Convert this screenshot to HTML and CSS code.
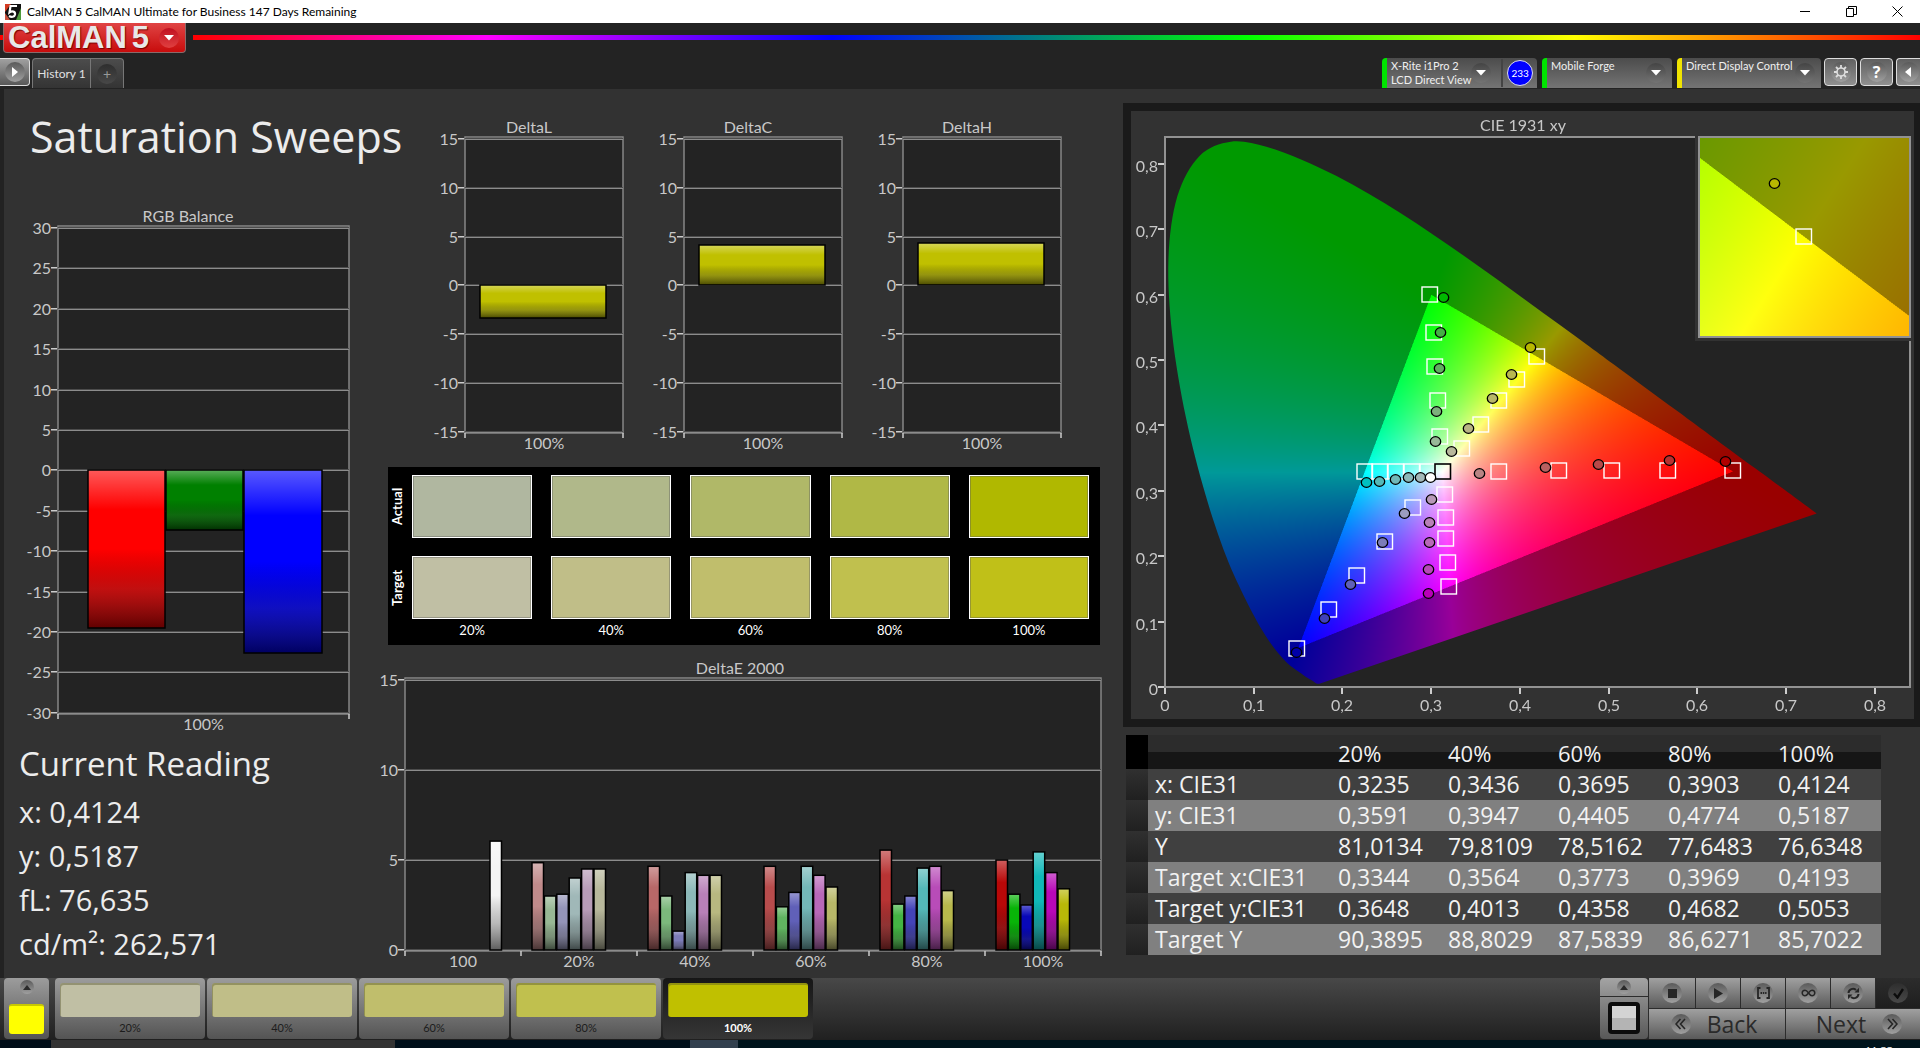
FILE: index.html
```html
<!DOCTYPE html>
<html lang="en">
<head>
<meta charset="utf-8">
<title>CalMAN 5 CalMAN Ultimate for Business</title>
<link rel="stylesheet" href="styles.css">
</head>
<body>
<div class="titlebar">
  <svg class="app-icon" viewBox="0 0 16 16" aria-hidden="true"><rect width="16" height="16" fill="#111"/><path d="M0 0h6L0 8z" fill="#d33a22"/><path d="M0 9l5 7H0z" fill="#c8503c"/><path d="M16 4v12h-5z" fill="#4e9a3c"/><path d="M12 2H5.500L4.500 8.500C7 6.500 10.500 7.500 10 10.500C9.500 13 6.500 13.500 4 12" fill="none" stroke="#fff" stroke-width="2.200"/></svg>
  <span class="titlebar-text">CalMAN 5 CalMAN Ultimate for Business 147 Days Remaining</span>
  <div class="window-buttons">
    <button class="window-button" aria-label="Minimize"><svg width="11" height="11" viewBox="0 0 11 11"><path d="M0 5.500h10" stroke="#000"/></svg></button>
    <button class="window-button" aria-label="Restore"><svg width="11" height="11" viewBox="0 0 11 11"><path d="M.5 2.500h7v8h-7zM2.500 2.500V.5h8v8H8" fill="none" stroke="#000"/></svg></button>
    <button class="window-button" aria-label="Close"><svg width="11" height="11" viewBox="0 0 11 11"><path d="M.5.5l10 10M10.500.5l-10 10" stroke="#000"/></svg></button>
  </div>
</div>

<header class="header">
  <div class="brand-row">
    <span class="spectrum-start"></span>
    <button class="brand" aria-label="CalMAN 5 menu"><span class="brand-name">CalMAN</span><span class="brand-version">5</span><span class="round brand-arrow"><svg width="10" height="6" viewBox="0 0 10 6"><path d="M0 0h10L5 5.500z" fill="#fff"/></svg></span></button>
    <span class="spectrum"></span>
  </div>
  <div class="tab-row">
    <button class="edge-button edge-left" aria-label="Show panel"><span class="round"><svg width="8" height="12" viewBox="0 0 8 12"><path d="M1 1v10l6-5z" fill="#fff"/></svg></span></button>
    <div class="tabs"><button class="tab">History 1</button><button class="tab tab-add" aria-label="Add tab"><span class="round round-dark">+</span></button></div>
    <div class="devices">
      <button class="device green meter"><span class="device-text">X-Rite i1Pro 2<br>LCD Direct View</span><span class="round round-mid"><svg width="10" height="6" viewBox="0 0 10 6"><path d="M0 0h10L5 5.500z" fill="#fff"/></svg></span><span class="count-cell"><span class="count">233</span></span></button>
      <button class="device green source"><span class="device-text">Mobile Forge</span><span class="round round-mid"><svg width="10" height="6" viewBox="0 0 10 6"><path d="M0 0h10L5 5.500z" fill="#fff"/></svg></span></button>
      <button class="device yellow display"><span class="device-text">Direct Display Control</span><span class="round round-mid"><svg width="10" height="6" viewBox="0 0 10 6"><path d="M0 0h10L5 5.500z" fill="#fff"/></svg></span></button>
      <div class="tools">
        <button class="edge-button" aria-label="Settings"><span class="round"><svg width="14" height="14" viewBox="0 0 14 14"><circle cx="7" cy="7" r="4" fill="none" stroke="#ddd" stroke-width="1.600"/><path d="M7 0v3M7 11v3M0 7h3M11 7h3M2 2l2.200 2.200M9.800 9.800L12 12M12 2L9.800 4.200M4.200 9.800L2 12" stroke="#ddd" stroke-width="1.800"/></svg></span></button>
        <button class="edge-button help" aria-label="Help"><span class="round">?</span></button>
        <button class="edge-button edge-right" aria-label="Collapse"><span class="round"><svg width="7" height="12" viewBox="0 0 7 12"><path d="M6 1v10L0 6z" fill="#fff"/></svg></span></button>
      </div>
    </div>
  </div>
</header>

<main class="workspace">
  <section class="column-left">
    <h1 class="page-title">Saturation Sweeps</h1>
    <svg id="rgb" class="chart" viewBox="4 200 372 535"></svg>
    <h2 class="reading-title">Current Reading</h2>
    <ul class="reading">
      <li>x: 0,4124</li>
      <li>y: 0,5187</li>
      <li>fL: 76,635</li>
      <li>cd/m²: 262,571</li>
    </ul>
  </section>

  <section class="column-middle">
    <div class="delta-row">
      <svg id="deltaL" class="chart" viewBox="428 89 219 378"></svg>
      <svg id="deltaC" class="chart" viewBox="428 89 219 378"></svg>
      <svg id="deltaH" class="chart" viewBox="428 89 219 378"></svg>
    </div>
    <div class="compare">
      <span class="compare-name">Actual</span>
      <span class="patch a20"></span><span class="patch a40"></span><span class="patch a60"></span><span class="patch a80"></span><span class="patch a100"></span>
      <span class="compare-name">Target</span>
      <span class="patch t20"></span><span class="patch t40"></span><span class="patch t60"></span><span class="patch t80"></span><span class="patch t100"></span>
      <span></span>
      <span class="patch-label">20%</span><span class="patch-label">40%</span><span class="patch-label">60%</span><span class="patch-label">80%</span><span class="patch-label">100%</span>
    </div>
    <svg id="deltaE" class="chart" viewBox="376 645 747 333"></svg>
  </section>

  <section class="column-right">
    <div class="cie">
      <canvas id="cieFill" class="cie-layer" width="783" height="608"></canvas>
      <svg id="cieAxes" class="cie-layer" viewBox="1131 111 783 608"></svg>
    </div>
    <table class="data">
      <colgroup><col class="col-grip"><col class="col-name"><col><col><col><col><col></colgroup>
      <thead><tr><th class="grip"></th><th></th><th>20%</th><th>40%</th><th>60%</th><th>80%</th><th>100%</th></tr></thead>
      <tbody>
        <tr><td class="grip"></td><td>x: CIE31</td><td>0,3235</td><td>0,3436</td><td>0,3695</td><td>0,3903</td><td>0,4124</td></tr>
        <tr><td class="grip"></td><td>y: CIE31</td><td>0,3591</td><td>0,3947</td><td>0,4405</td><td>0,4774</td><td>0,5187</td></tr>
        <tr><td class="grip"></td><td>Y</td><td>81,0134</td><td>79,8109</td><td>78,5162</td><td>77,6483</td><td>76,6348</td></tr>
        <tr><td class="grip"></td><td>Target x:CIE31</td><td>0,3344</td><td>0,3564</td><td>0,3773</td><td>0,3969</td><td>0,4193</td></tr>
        <tr><td class="grip"></td><td>Target y:CIE31</td><td>0,3648</td><td>0,4013</td><td>0,4358</td><td>0,4682</td><td>0,5053</td></tr>
        <tr><td class="grip"></td><td>Target Y</td><td>90,3895</td><td>88,8029</td><td>87,5839</td><td>86,6271</td><td>85,7022</td></tr>
      </tbody>
    </table>
  </section>
</main>

<footer class="footer">
  <button class="current-color" aria-label="Current color"><span class="round round-small"><svg width="8" height="5" viewBox="0 0 8 5"><path d="M0 5h8L4 0z" fill="#2a2a2a"/></svg></span><span class="current-chip"></span></button>
  <div class="levels">
    <button class="level"><span class="level-chip t20"></span>20%</button>
    <button class="level"><span class="level-chip t40"></span>40%</button>
    <button class="level"><span class="level-chip t60"></span>60%</button>
    <button class="level"><span class="level-chip t80"></span>80%</button>
    <button class="level active"><span class="level-chip full"></span>100%</button>
  </div>
  <div class="transport">
    <div class="window-pattern">
      <button class="pattern-up" aria-label="Pattern menu"><span class="round round-small"><svg width="8" height="5" viewBox="0 0 8 5"><path d="M0 5h8L4 0z" fill="#2a2a2a"/></svg></span></button>
      <button class="pattern-main" aria-label="Pattern window"><span class="pattern-icon"></span></button>
    </div>
    <div class="controls">
      <button class="control" aria-label="Stop"><span class="round"><svg width="9" height="9" viewBox="0 0 9 9"><path d="M0 0h9v9H0z" fill="#262626"/></svg></span></button>
      <button class="control" aria-label="Play"><span class="round"><svg width="9" height="11" viewBox="0 0 9 11"><path d="M0 0v11l9-5.500z" fill="#262626"/></svg></span></button>
      <button class="control" aria-label="Read series"><span class="round"><svg width="13" height="12" viewBox="0 0 13 12"><path d="M3.500 1H1v10h2.500M9.500 1H12v10H9.500" fill="none" stroke="#262626" stroke-width="1.800"/><path d="M3.500 6h6" stroke="#262626" stroke-width="1.800" stroke-dasharray="1.500 .8"/></svg></span></button>
      <button class="control" aria-label="Continuous"><span class="round"><svg width="15" height="8" viewBox="0 0 15 8"><path d="M7.500 4C6 1.800 5 1.200 4 1.200a2.800 2.800 0 0 0 0 5.600C5 6.800 6 6.200 7.500 4S10 1.200 11 1.200a2.800 2.800 0 0 1 0 5.600C10 6.800 9 6.200 7.500 4z" fill="none" stroke="#262626" stroke-width="1.500"/></svg></span></button>
      <button class="control" aria-label="Refresh"><span class="round"><svg width="13" height="13" viewBox="0 0 13 13"><path d="M1.500 6A4.500 4.500 0 0 1 9 3M11.500 7A4.500 4.500 0 0 1 4 10" fill="none" stroke="#262626" stroke-width="2"/><path d="M7.500 5.500h4.500V.8zM5.500 7.500H1v4.700z" fill="#262626"/></svg></span></button>
      <button class="control dark" aria-label="Accept"><span class="round round-dark"><svg width="11" height="11" viewBox="0 0 11 11"><path d="M1 5.500L4.500 9.500L10 1" fill="none" stroke="#0c0c0c" stroke-width="2.400"/></svg></span></button>
      <button class="control wide"><span class="round"><svg width="11" height="12" viewBox="0 0 11 12"><path d="M5.500 1L1 6l4.500 5M10 1L5.500 6l4.500 5" fill="none" stroke="#262626" stroke-width="1.600"/></svg></span>Back</button>
      <button class="control wide">Next<span class="round"><svg width="11" height="12" viewBox="0 0 11 12"><path d="M1 1l4.500 5L1 11M5.500 1L10 6l-4.500 5" fill="none" stroke="#262626" stroke-width="1.600"/></svg></span></button>
    </div>
  </div>
</footer>
<div class="taskbar"><span class="task-a"></span><span class="task-b"></span><span class="task-c"></span><span class="task-d"></span><span class="clock">11:33</span></div>
<script src="charts.js"></script>
</body>
</html>
```

FILE: styles.css
```css
* { box-sizing: border-box; }

body {
  margin: 0;
  min-height: 100vh;
  display: flex;
  flex-direction: column;
  background: #323232;
  color: #ececec;
  font-family: Lato, "Open Sans", sans-serif;
  overflow: hidden;
}

button {
  margin: 0;
  padding: 0;
  border: 0;
  background: none;
  color: inherit;
  font: inherit;
}

svg, canvas { display: block; }

/* Window title */
.titlebar {
  flex: none;
  display: flex;
  align-items: center;
  height: 23px;
  padding-left: 5px;
  gap: 6px;
  background: #fff;
  color: #000;
  font: 12px/23px Lato, sans-serif;
}
.app-icon { width: 16px; height: 16px; }
.window-buttons { display: flex; margin-left: auto; }
.window-button { width: 46px; height: 23px; display: grid; place-items: center; }

/* Header */
.header { flex: none; background: #232323; height: 66px; }
.brand-row { display: flex; align-items: flex-start; height: 35px; }
.spectrum-start { width: 3px; height: 5px; margin-top: 12px; background: #f00; }
.brand {
  display: flex;
  align-items: center;
  width: 183px;
  height: 30px;
  padding-left: 4px;
  border: 1px solid #8a6a6a;
  border-top: 0;
  border-radius: 0 0 4px 4px;
  background: linear-gradient(#e04444, #c80c0c);
  color: #e8e8e8;
  font: bold 31px/26px "Liberation Sans", sans-serif;
  text-shadow: 1px 1px 1px #700;
}
.brand-version { margin-left: 5px; }
.spectrum {
  flex: 1;
  height: 5px;
  margin: 12px 0 0 7px;
  background: linear-gradient(90deg, #f00, #f0f 17%, #00f 37%, #0f0 61%, #ff0 80%, #f00);
}
.round {
  flex: none;
  display: grid;
  place-items: center;
  width: 20px;
  height: 20px;
  border-radius: 50%;
  background: linear-gradient(#5a5a5a, #a0a0a0);
}
.brand-arrow { margin-left: auto; margin-right: 6px; background: linear-gradient(#c01020, #e04040); }
.round-mid { background: linear-gradient(#444, #747474); }
.round-dark { background: linear-gradient(#2e2e2e, #484848); }
.round-small { width: 14px; height: 14px; }

.tab-row { display: flex; align-items: flex-start; height: 31px; }
.edge-button {
  display: grid;
  place-items: center;
  width: 33px;
  height: 28px;
  border: 1px solid #ddd;
  border-radius: 4px;
  background: linear-gradient(#606060, #909090);
}
.edge-left { width: 30px; border-left: 0; border-radius: 0 4px 4px 0; background: linear-gradient(#a0a0a0, #585858); }
.edge-right { width: 24px; border-right: 0; border-radius: 4px 0 0 4px; }
.help { font: bold 16px/20px "Open Sans", sans-serif; color: #fff; }
.tabs {
  display: flex;
  margin-left: 2px;
  height: 30px;
  border: 1px solid #777;
  border-bottom: 0;
  border-radius: 4px 4px 0 0;
  background: linear-gradient(#4c4c4c, #343434);
}
.tab { width: 57px; font-size: 12px; color: #e0e0e0; }
.tab-add { display: grid; place-items: center; width: 33px; border-left: 1px solid #777; color: #999; font-size: 14px; }
.devices { display: flex; margin-left: auto; gap: 5px; }
.device {
  display: flex;
  align-items: center;
  height: 30px;
  padding: 0 6px 0 4px;
  border-left: 5px solid;
  border-radius: 4px 4px 0 0;
  background: linear-gradient(#4c4c4c, #747474);
  font-size: 11px;
  line-height: 14px;
  text-align: left;
}
.green { border-left-color: #00e400; }
.yellow { border-left-color: #f0e400; }
.device-text { flex: 1; align-self: flex-start; white-space: nowrap; color: #f0f0f0; padding-top: 1px; }
.meter { width: 155px; padding-right: 0; }
.source { width: 130px; }
.display { width: 144px; }
.count-cell { display: grid; place-items: center; width: 36px; height: 28px; margin-left: 10px; border-left: 2px solid #444; }
.count {
  width: 26px;
  height: 26px;
  border: 1px solid #dde;
  border-radius: 50%;
  background: #00f;
  color: #fff;
  font-size: 10px;
  line-height: 24px;
  text-align: center;
}
.tools { display: flex; gap: 3px; margin-left: -2px; }

/* Workspace */
.workspace {
  flex: 1;
  display: grid;
  grid-template-columns: minmax(0, 372fr) minmax(0, 747fr) minmax(0, 797fr);
  border-left: 4px solid #222;
}
.chart { width: 100%; overflow: visible; }
.chart text, .cie-layer text { font: 16px Lato, sans-serif; fill: #c8c8c8; }
.page-title { margin: 0; padding: 20px 0 0 26px; height: 111px; font: 400 43px/56px "Open Sans", sans-serif; white-space: nowrap; }
.reading-title { margin: 9px 0 0 15px; font: 400 33px/40px "Open Sans", sans-serif; }
.reading { list-style: none; margin: 6px 0 0; padding: 0 0 0 15px; font: 29px/44px "Open Sans", sans-serif; }

.delta-row { display: grid; grid-template-columns: repeat(3, 219fr); padding: 0 38px 0 52px; }
.compare {
  display: grid;
  grid-template-columns: 5px repeat(5, minmax(0, 1fr));
  grid-template-rows: 63px 63px 22px;
  gap: 18px 19px;
  height: 178px;
  margin: 0 23px 0 12px;
  padding: 8px 11px 0 0;
  background: #000;
  color: #fff;
}
.compare-name {
  width: 19px;
  writing-mode: vertical-rl;
  transform: rotate(180deg);
  font-size: 13px;
  font-weight: 700;
  line-height: 19px;
  text-align: center;
}
.patch { border: 1px solid #fff; box-shadow: inset 0 0 0 1px rgba(90, 90, 90, .4); }
.patch-label { margin-top: -18px; text-align: center; font-size: 13px; line-height: 22px; }
.a20 { background: #b0b7a0; }
.a40 { background: #b0b88a; }
.a60 { background: #b0b868; }
.a80 { background: #b0b846; }
.a100 { background: #b0b800; }
.t20 { background: #c0bfa4; }
.t40 { background: #c0be88; }
.t60 { background: #c0be6c; }
.t80 { background: #c0c04e; }
.t100 { background: #c0c018; }
.full { background: #c0c000; }

.column-right { padding-top: 14px; }
.cie { display: grid; border: solid #1a1a1a; border-width: 8px 6px 8px 8px; }
.cie-layer { grid-area: 1 / 1; width: 100%; }
.data {
  width: calc(100% - 42px);
  margin: 8px 0 0 3px;
  border-collapse: collapse;
  table-layout: fixed;
  font: 23px/30px "Open Sans", sans-serif;
  color: #f2f2f2;
}
.col-grip { width: 22px; }
.col-name { width: 183px; }
.data th, .data td { height: 31px; padding: 0 0 1px 7px; text-align: left; font-weight: 400; white-space: nowrap; }
.data th { height: 34px; padding-top: 2px; font-size: 22px; }
.data thead { background: linear-gradient(#2c2c2c 50%, #161616 50%); }
.data thead .grip { background: #000; }
.data tbody tr { background: #404040; }
.data tbody tr:nth-child(even) { background: #808080; }
.data tbody .grip { background: linear-gradient(#303030, #202020); }

/* Footer */
.footer { flex: none; display: flex; height: 62px; padding-bottom: 1px; padding-left: 4px; background: linear-gradient(#484848, #202020); }
.current-color {
  display: flex;
  flex-direction: column;
  align-items: center;
  width: 45px;
  padding-top: 2px;
  border-radius: 4px;
  background: linear-gradient(#9c9c9c, #545454);
}
.current-chip { width: 35px; height: 30px; margin-top: 10px; border-radius: 3px; background: #ff0; border-top: 2px solid #c8c800; }
.levels { display: flex; gap: 2px; margin-left: 6px; }
.level {
  display: flex;
  flex-direction: column;
  align-items: center;
  width: 150px;
  padding-top: 5px;
  border-radius: 4px;
  background: linear-gradient(#9c9c9c, #545454);
  color: #1c1c1c;
  font-size: 11px;
  line-height: 22px;
}
.level.active { background: linear-gradient(#161616, #363636); color: #fff; font-weight: 700; }
.level-chip { width: 140px; height: 36px; border-radius: 3px; box-shadow: inset 1px 2px 0 rgba(80, 80, 40, .4); }
.transport { display: flex; gap: 1px; margin-left: auto; width: 320px; background: #2c2c2c; }
.window-pattern { display: flex; flex-direction: column; gap: 1px; width: 48px; }
.pattern-up { display: grid; place-items: center; height: 18px; border-radius: 4px 4px 0 0; background: linear-gradient(#a4a4a4, #8c8c8c); }
.pattern-main { display: grid; place-items: center; flex: 1; border-radius: 0 0 4px 4px; background: linear-gradient(#8a8a8a, #585858); }
.pattern-icon { width: 32px; height: 32px; border: 4px solid #0c0c0c; border-radius: 4px; background: linear-gradient(#d4d4d4 50%, #b4b4b4 50%); }
.controls { flex: 1; display: grid; grid-template-columns: 46px repeat(5, 1fr); grid-template-rows: 1fr 1fr; gap: 1px; }
.control { display: grid; place-items: center; background: linear-gradient(#a0a0a0, #5a5a5a); }
.control.dark { background: linear-gradient(#2c2c2c, #1e1e1e); }
.control.wide {
  grid-column: span 3;
  display: flex;
  align-items: center;
  justify-content: center;
  gap: 16px;
  padding-right: 6px;
  color: #2a2a2a;
  font: 500 23px/28px "Open Sans", sans-serif;
}
.control.wide:last-child { padding: 0 0 0 12px; }

.taskbar { flex: none; display: flex; height: 8px; overflow: hidden; background: #00141c; }
.task-a { width: 51px; background: #000d18; }
.task-b { width: 344px; background: #333; }
.task-c { width: 295px; background: #000f1a; }
.task-d { width: 48px; background: #32404e; }
.clock { margin-left: auto; padding: 3px 27px 0 0; color: #fff; font: 11px/16px "Open Sans", sans-serif; }
```

FILE: charts.js
```js
const NS = 'http://www.w3.org/2000/svg';

function add(parent, name, attrs, text) {
  const el = document.createElementNS(NS, name);
  for (const key in attrs) el.setAttribute(key, attrs[key]);
  if (text !== undefined) el.textContent = text;
  parent.appendChild(el);
  return el;
}

function gloss(svg) {
  const id = svg.id + 'Gloss';
  const grad = add(add(svg, 'defs', {}), 'linearGradient', { id, x1: 0, y1: 0, x2: 0, y2: 1 });
  [[0, '#fff', .35], [.25, '#fff', 0], [.5, '#000', 0], [.75, '#333', .3], [1, '#000', .62]].forEach(([offset, color, opacity]) =>
    add(grad, 'stop', { offset, 'stop-color': color, 'stop-opacity': opacity }));
  return `url(#${id})`;
}

// Bar chart: c.x0..c.x1 is the plot width, c.top the y of the first tick.
function barChart(id, c) {
  const svg = document.getElementById(id);
  const fill = gloss(svg);
  const bottom = Math.round(c.top + c.step * (c.ticks.length - 1));
  add(svg, 'text', { x: c.titleX, y: c.top - 6, 'text-anchor': 'middle' }, c.title);
  add(svg, 'rect', { x: c.x0, y: c.top - 2, width: c.x1 - c.x0, height: bottom - c.top + 3, fill: '#232323', stroke: '#868686', 'stroke-width': 1.5 });
  c.ticks.forEach((tick, i) => {
    const y = Math.round(c.top + i * c.step);
    add(svg, 'rect', { x: c.x0, y: y - 1, width: c.x1 - c.x0, height: 1, fill: '#4c4c4c' });
    add(svg, 'rect', { x: c.x0, y, width: c.x1 - c.x0, height: 1, fill: '#8c8c8c' });
    add(svg, 'rect', { x: c.x0 - 7, y: y - 1, width: 6, height: 1.5, fill: '#ccc' });
    add(svg, 'text', { x: c.x0 - 7, y: y + 6, 'text-anchor': 'end' }, tick);
  });
  c.bars.forEach(([x, w, y, h, color]) => {
    add(svg, 'rect', { x, y, width: w, height: h, fill: color });
    add(svg, 'rect', { x, y, width: w, height: h, fill, stroke: '#000', 'stroke-width': 1.5 });
  });
  const n = c.labels.length;
  for (let i = 0; i <= n; i++) {
    const x = c.x0 + (c.x1 - c.x0) * i / n;
    add(svg, 'rect', { x: x - .75, y: bottom + 1, width: 1.5, height: 5, fill: '#ccc' });
    if (i < n) add(svg, 'text', { x: x + (c.x1 - c.x0) / n / 2, y: bottom + 17, 'text-anchor': 'middle' }, c.labels[i]);
  }
}

barChart('rgb', {
  title: 'RGB Balance', titleX: 188, x0: 58, x1: 349, top: 228, step: 40.4,
  ticks: [30, 25, 20, 15, 10, 5, 0, -5, -10, -15, -20, -25, -30], labels: ['100%'],
  bars: [[88, 77, 470, 158, '#f00'], [166, 77, 470, 60, '#008000'], [244, 78, 470, 183, '#00f']]
});

[['L', 285, 33], ['C', 245, 40], ['H', 243, 42]].forEach(([name, y, h]) => barChart('delta' + name, {
  title: 'Delta' + name, titleX: 529, x0: 465, x1: 623, top: 139, step: 48.8,
  ticks: [15, 10, 5, 0, -5, -10, -15], labels: ['100%'], bars: [[480, 126, y, h, '#c0c000']]
}));

const groups = [
  [490, [6.05], ['#f4f4f4']],
  [532, [4.85, 3, 3.1, 4, 4.5, 4.5], ['#c08a8a', '#98b894', '#9494b8', '#a0b8b8', '#b89cb8', '#b8b89c']],
  [648, [4.65, 3, 1.05, 4.3, 4.15, 4.15], ['#b86868', '#7cb87c', '#7c7cb8', '#8cb8b8', '#b880b8', '#b8b880']],
  [764, [4.65, 2.4, 3.2, 4.65, 4.15, 3.5], ['#b84c4c', '#60b460', '#6060b8', '#74b8b8', '#b868b8', '#b8b868']],
  [880, [5.55, 2.55, 3, 4.55, 4.65, 3.3], ['#b83434', '#44b444', '#4444b8', '#54b8b8', '#b84cb8', '#b8b84c']],
  [996, [5, 3.1, 2.5, 5.45, 4.3, 3.4], ['#b80808', '#08b408', '#0808b8', '#10b8b8', '#b808b8', '#b8b808']]
];
barChart('deltaE', {
  title: 'DeltaE 2000', titleX: 740, x0: 405, x1: 1101, top: 680, step: 90,
  ticks: [15, 10, 5, 0], labels: ['100', '20%', '40%', '60%', '80%', '100%'],
  bars: groups.flatMap(([x, values, colors]) => values.map((v, i) => [x + i * 12.4, 11.5, 950 - v * 18, v * 18, colors[i]]))
});

// Chromaticity diagram
const OX = 1131, OY = 111;
const LOCUS = [[.1741,.005],[.1733,.0048],[.1714,.0051],[.1689,.0069],[.1644,.0109],[.1566,.0177],[.144,.0297],[.1355,.0399],[.1241,.0578],[.1096,.0868],[.0913,.1327],[.0687,.2007],[.0454,.295],[.0235,.4127],[.0082,.5384],[.0039,.6548],[.0139,.7502],[.0389,.812],[.0743,.8338],[.1142,.8262],[.1547,.8059],[.1929,.7816],[.2296,.7543],[.2658,.7243],[.3016,.6923],[.3373,.6589],[.3731,.6245],[.4087,.5896],[.4441,.5547],[.4788,.5202],[.5125,.4866],[.5752,.4242],[.627,.3725],[.6658,.334],[.6915,.3083],[.719,.2809],[.7347,.2653]];

function colorAt(x, y) {
  const z = 1 - x - y;
  let rgb = [
    3.2406 * x - 1.5372 * y - .4986 * z,
    -.9689 * x + 1.8758 * y + .0415 * z,
    .0557 * x - .204 * y + 1.057 * z
  ];
  const scale = Math.min(...rgb) < 0 ? 153 : 255;
  rgb = rgb.map(v => Math.max(0, v));
  const max = Math.max(...rgb);
  return rgb.map(v => v / max * scale);
}

// Colors a w x h area at double density; toXY maps an area pixel to chromaticity.
function field(w, h, toXY) {
  const cv = document.createElement('canvas');
  cv.width = w * 2;
  cv.height = h * 2;
  const cx = cv.getContext('2d');
  const img = cx.createImageData(cv.width, cv.height);
  let p = 0;
  for (let j = 0; j < cv.height; j++) {
    for (let i = 0; i < cv.width; i++) {
      const [r, g, b] = colorAt(...toXY(i / 2, j / 2));
      img.data[p++] = r;
      img.data[p++] = g;
      img.data[p++] = b;
      img.data[p++] = 255;
    }
  }
  cx.putImageData(img, 0, 0);
  return cv;
}

const ctx = document.getElementById('cieFill').getContext('2d');
ctx.fillStyle = '#232323';
ctx.fillRect(1165 - OX, 137 - OY, 746, 550);
ctx.save();
const pts = LOCUS.map(([x, y]) => [1165 - OX + x * 887, 687 - OY - y * 654]);
ctx.beginPath();
ctx.moveTo(...pts[0]);
for (let i = 0; i < pts.length - 1; i++) {
  const a = pts[Math.max(i - 1, 0)], b = pts[i], c = pts[i + 1], d = pts[Math.min(i + 2, pts.length - 1)];
  ctx.bezierCurveTo(b[0] + (c[0] - a[0]) / 6, b[1] + (c[1] - a[1]) / 6, c[0] - (d[0] - b[0]) / 6, c[1] - (d[1] - b[1]) / 6, c[0], c[1]);
}
ctx.closePath();
ctx.clip();
ctx.drawImage(field(746, 550, (i, j) => [i / 887, (550 - j) / 654]), 1165 - OX, 137 - OY, 746, 550);
ctx.restore();
ctx.fillStyle = '#323232';
ctx.fillRect(1695 - OX, 130 - OY, 219, 211);
ctx.drawImage(field(211, 200, (i, j) => [.4193 + (i - 104.5) / 4200, .5053 - (j - 99) / 3993]), 1699 - OX, 137 - OY, 211, 200);

const cie = document.getElementById('cieAxes');
add(cie, 'text', { x: 1523, y: 131, 'text-anchor': 'middle' }, 'CIE 1931 xy');
add(cie, 'path', { d: 'M1695 137H1165V687H1910V341', fill: 'none', stroke: '#929292', 'stroke-width': 2 });
add(cie, 'rect', { x: 1699, y: 137, width: 211, height: 200, fill: 'none', stroke: '#929292', 'stroke-width': 2 });
for (let i = 0; i <= 8; i++) {
  const label = i ? '0,' + i : '0';
  const x = Math.round(1165 + i * 88.7), y = Math.round(687 - i * 65.4);
  add(cie, 'rect', { x: x - 1, y: 688, width: 2, height: 6, fill: '#ccc' });
  add(cie, 'text', { x, y: 711, 'text-anchor': 'middle' }, label);
  add(cie, 'rect', { x: 1158, y: y - 1, width: 6, height: 2, fill: '#ccc' });
  add(cie, 'text', { x: 1158, y: y + 8, 'text-anchor': 'end' }, label);
}

const targets = [
  [1429,294],[1433,332],[1434,366],[1437,400],[1439,436],
  [1536,356],[1516,379],[1498,400],[1480,424],[1461,448],
  [1364,471],[1379,471],[1395,471],[1411,471],[1427,471],
  [1498,471],[1558,470],[1611,470],[1667,470],[1732,470],
  [1412,507],[1384,541],[1356,575],[1328,609],[1296,648],
  [1444,494],[1445,517],[1445,538],[1447,562],[1448,586],
  [1803,236]
];
targets.forEach(([x, y]) => add(cie, 'rect', { x: x - 7, y: y - 7, width: 15.5, height: 15, fill: 'none', stroke: '#fff', 'stroke-width': 1.4 }));
add(cie, 'rect', { x: 1435, y: 464, width: 15.5, height: 15, fill: 'none', stroke: '#000', 'stroke-width': 1.6 });

const readings = [
  [1443,297,'#00b800'],[1440,332,'#44b044'],[1439,368,'#60b060'],[1436,411,'#7cb07c'],[1435,441,'#98b898'],
  [1530,347,'#b8b800'],[1511,374,'#b8b850'],[1492,398,'#b8b868'],[1468,428,'#b8b484'],[1451,451,'#b8b89c'],
  [1366,482,'#00c0c0'],[1379,481,'#54b8b8'],[1395,479,'#70b8b8'],[1408,477,'#8cb8b8'],[1420,477,'#a4b8b8'],[1430,477,'#fff'],
  [1479,473,'#b88484'],[1545,467,'#b86060'],[1598,464,'#b84848'],[1669,460,'#b83030'],[1725,461,'#b00000'],
  [1404,513,'#9c9cc0'],[1382,542,'#7c7cb8'],[1350,584,'#6060b8'],[1324,618,'#4040b8'],[1296,652,'#0000a8'],
  [1431,499,'#b898b8'],[1429,522,'#b880b8'],[1429,542,'#b868b8'],[1428,569,'#b848b8'],[1428,593,'#b800b8'],
  [1774,183,'#b8b800']
];
readings.forEach(([x, y, color]) => add(cie, 'ellipse', { cx: x + .5, cy: y + .5, rx: 5.2, ry: 4.8, fill: color, stroke: '#000', 'stroke-width': 1.3 }));
```
